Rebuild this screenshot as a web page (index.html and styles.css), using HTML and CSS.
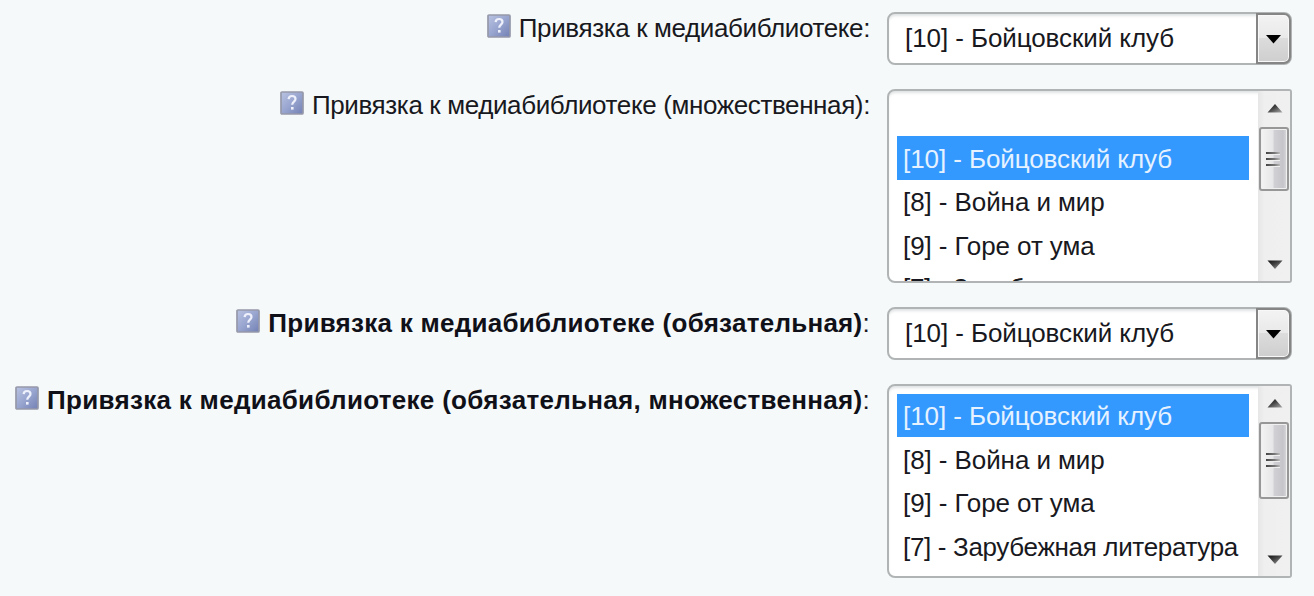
FILE: index.html
```html
<!DOCTYPE html>
<html lang="ru">
<head>
<meta charset="utf-8">
<title>Привязка к медиабиблиотеке</title>
<link rel="stylesheet" href="styles.css">
</head>
<body>
<svg class="defs" aria-hidden="true">
  <defs>
    <linearGradient id="help-fill" x1="0" y1="0" x2="1" y2="1">
      <stop offset="0" stop-color="#b9c3e2"/><stop offset=".5" stop-color="#98a5cf"/><stop offset="1" stop-color="#7280b4"/>
    </linearGradient>
    <linearGradient id="arrow-fill" x1="0" y1="0" x2="1" y2="1">
      <stop offset="0" stop-color="#111"/><stop offset=".45" stop-color="#444"/><stop offset="1" stop-color="#aaa"/>
    </linearGradient>
    <symbol id="help" viewBox="0 0 24 24">
      <rect x="1" y="1" width="22" height="22" rx="1" fill="url(#help-fill)" stroke="#9699a9" stroke-width="1.7"/>
      <path d="M8.6 8.2C8.8 5.8 10.2 5 12 5c2.100 0 3.500 1.100 3.500 3 0 2.600-3.300 2.800-3.300 5.800" fill="none" stroke="#eef1fb" stroke-width="2.200"/>
      <rect x="11" y="16" width="2.600" height="2.600" fill="#eef1fb"/>
    </symbol>
    <symbol id="up" viewBox="0 0 16 9"><path d="M8 0L15.500 8.500H.5z" fill="url(#arrow-fill)"/></symbol>
    <symbol id="down" viewBox="0 0 16 9"><path d="M.5.500H15.500L8 9z" fill="url(#arrow-fill)"/></symbol>
  </defs>
</svg>
<main class="form">
  <div class="row">
    <div class="label"><svg class="help"><use href="#help"/></svg><span class="t1">Привязка к медиабиблиотеке:</span></div>
    <div class="select"><span class="value">[10] - Бойцовский клуб</span><span class="drop"><svg class="caret" viewBox="0 0 15 9"><path d="M0 0H15L7.500 8.500z"/></svg></span></div>
  </div>
  <div class="row">
    <div class="label"><svg class="help"><use href="#help"/></svg><span class="t2">Привязка к медиабиблиотеке (множественная):</span></div>
    <div class="list">
      <ul class="options">
        <li class="option blank"></li>
        <li class="option selected"><span class="o10">[10] - Бойцовский клуб</span></li>
        <li class="option"><span class="o8">[8] - Война и мир</span></li>
        <li class="option"><span class="o9">[9] - Горе от ума</span></li>
        <li class="option partial"><span class="o7">[7] - Зарубежная литература</span></li>
      </ul>
      <div class="scrollbar"><svg class="arrow"><use href="#up"/></svg><div class="thumb"><i></i><i></i><i></i></div><svg class="arrow end"><use href="#down"/></svg></div>
    </div>
  </div>
  <div class="row">
    <div class="label"><svg class="help"><use href="#help"/></svg><span class="t3"><b>Привязка к медиабиблиотеке (обязательная)</b>:</span></div>
    <div class="select"><span class="value">[10] - Бойцовский клуб</span><span class="drop"><svg class="caret" viewBox="0 0 15 9"><path d="M0 0H15L7.500 8.500z"/></svg></span></div>
  </div>
  <div class="row">
    <div class="label"><svg class="help"><use href="#help"/></svg><span class="t4"><b>Привязка к медиабиблиотеке (обязательная, множественная)</b>:</span></div>
    <div class="list">
      <ul class="options">
        <li class="option selected"><span class="o10">[10] - Бойцовский клуб</span></li>
        <li class="option"><span class="o8">[8] - Война и мир</span></li>
        <li class="option"><span class="o9">[9] - Горе от ума</span></li>
        <li class="option"><span class="o7">[7] - Зарубежная литература</span></li>
      </ul>
      <div class="scrollbar"><svg class="arrow"><use href="#up"/></svg><div class="thumb tall"><i></i><i></i><i></i></div><svg class="arrow end"><use href="#down"/></svg></div>
    </div>
  </div>
</main>
</body>
</html>
```
FILE: styles.css
```css
* { box-sizing: border-box; }
body {
  margin: 0;
  height: 596px;
  overflow: hidden;
  background: #f5f9fa;
  color: #181820;
  font: 26px/30px "Liberation Sans", Arial, sans-serif;
  white-space: nowrap;
}
.defs { display: block; width: 0; height: 0; }
.form { display: flex; flex-direction: column; gap: 24px; padding-top: 12px; }
.row { display: grid; grid-template-columns: 870px 405px; column-gap: 17px; align-items: start; }
.label { display: flex; justify-content: flex-end; gap: 8px; padding-top: 1px; }
.help { width: 24px; height: 24px; flex: none; margin-top: .5px; }
.label b { color: #101018; }
.t1, .t2 { letter-spacing: -.38px; }
.t3 { letter-spacing: .27px; }
.t4 { letter-spacing: .3px; }
.value, .o10, .o8, .o9 { letter-spacing: -.08px; }
.o7 { letter-spacing: -.33px; }

.select, .list {
  display: flex;
  border: 2px solid #b0b4b4;
  border-radius: 8px;
  background: #fff;
  box-shadow: inset 0 3px 3px -1px #dfe2e3;
}
.select { height: 53px; justify-content: space-between; }
.value { padding: 9px 0 0 16px; }
.drop {
  display: flex;
  align-items: center;
  justify-content: center;
  width: 35px;
  margin: -1px -1px -1px 0;
  border: 2px solid #858585;
  border-radius: 0 7px 7px 0;
  background: linear-gradient(#f3f3f3, #e9e9e9 49%, #dcdcdc 50%, #cecece);
  box-shadow: inset 0 0 0 1px #f8f8f8;
}
.caret { width: 15px; height: 9px; margin-top: 2px; }

.list { height: 194px; border-radius: 8px 3px 3px 8px; overflow: hidden; }
.options { flex: 1; margin: 0; padding: 7.5px 9px 0 8px; list-style: none; }
.option { height: 43.7px; padding: 7.5px 0 0 6px; }
.blank { height: 37.5px; }
.partial { margin-top: -2px; }
.selected { background: #3399ff; color: #e6f2ff; }

.scrollbar {
  display: flex;
  flex-direction: column;
  align-items: center;
  width: 32px;
  padding: 13px 1px 12px 0;
  background: linear-gradient(90deg, #e6e6e6, #efefef 20%, #f0f0f0);
}
.arrow { width: 16px; height: 9px; flex: none; margin-left: 2px; }
.end { margin-top: auto; }
.thumb {
  display: flex;
  flex-direction: column;
  align-items: center;
  justify-content: center;
  gap: 3px;
  width: 30px;
  height: 64px;
  margin-top: 14px;
  border: 2px solid #979797;
  border-radius: 3px;
  background: linear-gradient(90deg, #f4f4f4, #e6e6e8 45%, #d0d0d4 52%, #c5c5ca 85%, #dcdcdf);
  box-shadow: inset 0 0 0 1px #f0f0f0;
}
.thumb i { width: 14px; height: 3px; margin-right: 1px; background: linear-gradient(90deg, #444, #777 60%, #bbb); border-bottom: 1px solid #eee; }
.tall { height: 77px; }
```
